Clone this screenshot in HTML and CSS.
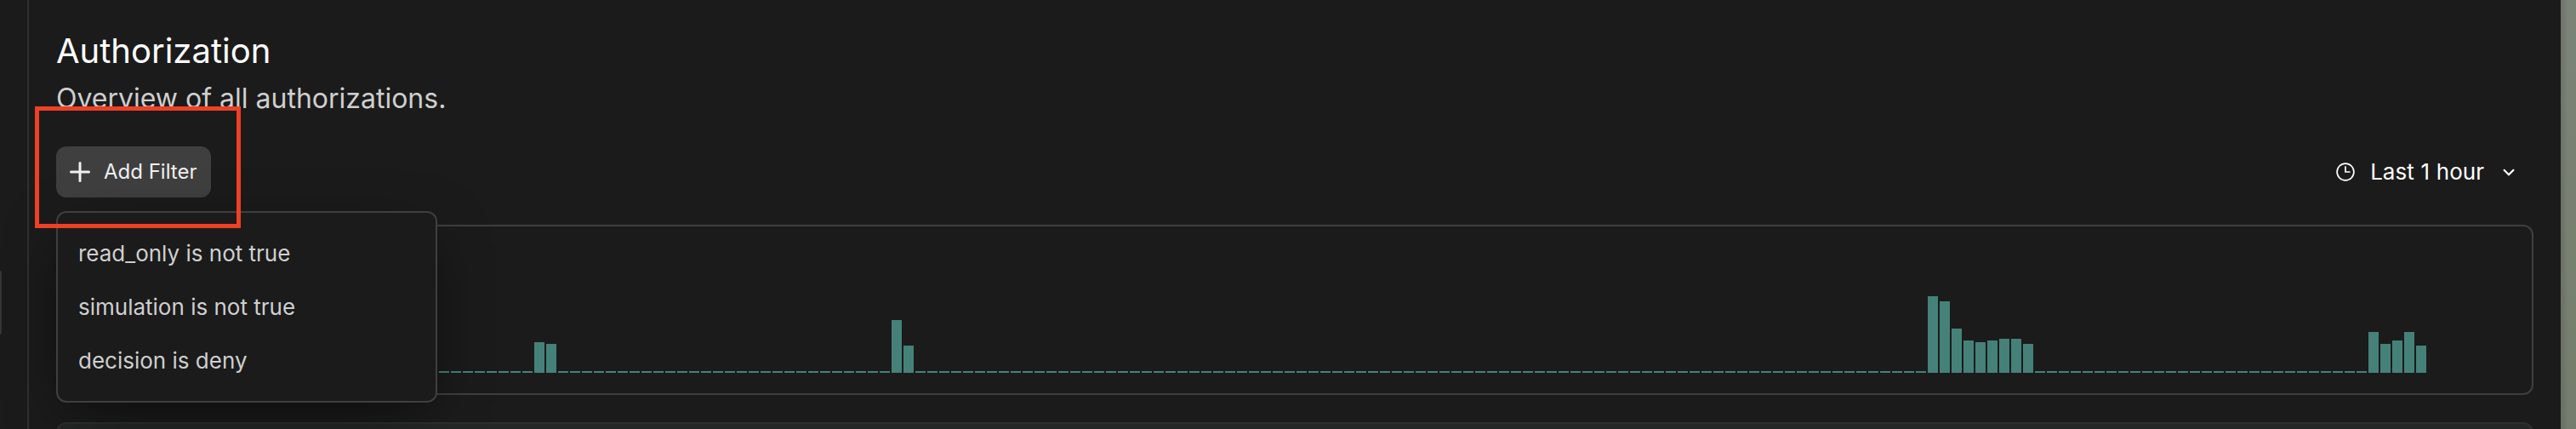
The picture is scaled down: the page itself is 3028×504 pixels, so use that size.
FILE: index.html
```
<!DOCTYPE html>
<html lang="en">
<head>
<meta charset="utf-8">
<title>Authorization</title>
<link rel="stylesheet" href="styles.css">
</head>
<body>
<div class="window">
  <aside class="rail"><span class="handle"></span></aside>
  <main class="page">
    <h1 class="title">Authorization</h1>
    <p class="subtitle">Overview of all authorizations.</p>
    <div class="toolbar">
      <div class="filter">
        <button class="add">
          <svg width="24" height="26" viewBox="0 0 24 26" fill="none" stroke="currentColor" stroke-width="3" stroke-linecap="round"><path d="M12 2.5v21M1.5 13h21"/></svg>
          <span>Add Filter</span>
        </button>
        <ul class="menu">
          <li>read_only is not true</li>
          <li>simulation is not true</li>
          <li>decision is deny</li>
        </ul>
        <div class="highlight"></div>
      </div>
      <button class="range">
        <svg width="22" height="22" viewBox="0 0 22 22" fill="none" stroke="currentColor" stroke-width="1.7"><circle cx="11" cy="11" r="9.9"/><path d="M11 4.2V11h5.6"/></svg>
        <span>Last 1 hour</span>
        <svg class="chevron" width="14" height="9" viewBox="0 0 14 9" fill="none" stroke="currentColor" stroke-width="2.3"><path d="M1 1.2l6 6 6-6"/></svg>
      </button>
    </div>
    <section class="card chart" id="chart"></section>
    <section class="card next"></section>
  </main>
</div>
<div class="desktop"></div>
<script src="chart.js"></script>
</body>
</html>
```
FILE: chart.js
```
const chart = document.getElementById('chart');
const total = 198;
const peaks = {
  39: 36, 40: 34,
  69: 62, 70: 32,
  156: 90, 157: 84, 158: 52, 159: 38, 160: 36, 161: 38, 162: 40, 163: 40, 164: 34,
  193: 48, 194: 34, 195: 38, 196: 48, 197: 32
};
for (let i = 0; i < total; i++) {
  const bar = document.createElement('i');
  bar.className = 'bar';
  bar.style.height = (peaks[i] || 2) + 'px';
  chart.appendChild(bar);
}
```
FILE: styles.css
```
* { box-sizing: border-box; }
html, body { margin: 0; height: 504px; overflow: hidden; }
body { display: flex; background: #1b1b1b; font-family: Inter, "Liberation Sans", sans-serif; color: #fff; }
.window { display: flex; width: 3010px; height: 504px; overflow: hidden; background: #1b1b1b; }
.rail { width: 34px; flex: none; border-right: 2px solid #303030; padding-top: 318px; }
.handle { display: block; width: 2px; height: 75px; background: #353535; border-radius: 0 2px 2px 0; }
.page { flex: none; width: 2976px; padding: 30px 32px 0; display: flex; flex-direction: column; }
.title { margin: 0; font-size: 40px; line-height: 60px; font-weight: 400; white-space: nowrap; }
.subtitle { margin: 0; font-size: 32px; line-height: 52px; color: #cfcfcf; white-space: nowrap; }
.toolbar { margin-top: 30px; height: 60px; display: flex; justify-content: space-between; align-items: center; }
.filter { position: relative; }
button { border: 0; background: none; font: inherit; color: inherit; display: flex; align-items: center; padding: 0; white-space: nowrap; }
.add { width: 182px; height: 60px; border-radius: 12px; background: #3f3f3f; color: #f0f0f0; padding-left: 16px; gap: 16px; font-size: 24px; }
.range { font-size: 26px; padding-right: 22px; gap: 18px; word-spacing: 0.5px; }
.add span, .range span { padding-bottom: 2px; }
.chevron { margin-left: 4px; }
.menu { position: absolute; left: 0; top: 76px; width: 448px; height: 225px; margin: 0; padding: 16px 24px; list-style: none; background: #1b1b1b; border: 2px solid #3f3f3f; border-radius: 12px; box-shadow: 0 20px 76px -20px rgba(0,0,0,.7); font-size: 26px; line-height: 63px; color: #cfcfcf; white-space: nowrap; z-index: 1; }
.highlight { position: absolute; left: -25px; top: -47px; width: 242px; height: 143px; border: 5px solid #ee4025; z-index: 2; }
.card { border: 2px solid #3f3f3f; border-radius: 12px; flex: none; }
.chart { margin-top: 32px; height: 200px; padding: 0 14px 24px; display: flex; align-items: flex-end; gap: 2px; }
.bar { width: 12px; flex: none; background: #458179; }
.next { margin-top: 32px; height: 80px; background: #252626; border-color: #2d2f2f; }
.desktop { flex: 1; background: linear-gradient(90deg, rgba(0,0,0,.12), transparent 8px), linear-gradient(#7b8278, #788071 60%, #747c6e); }
```
